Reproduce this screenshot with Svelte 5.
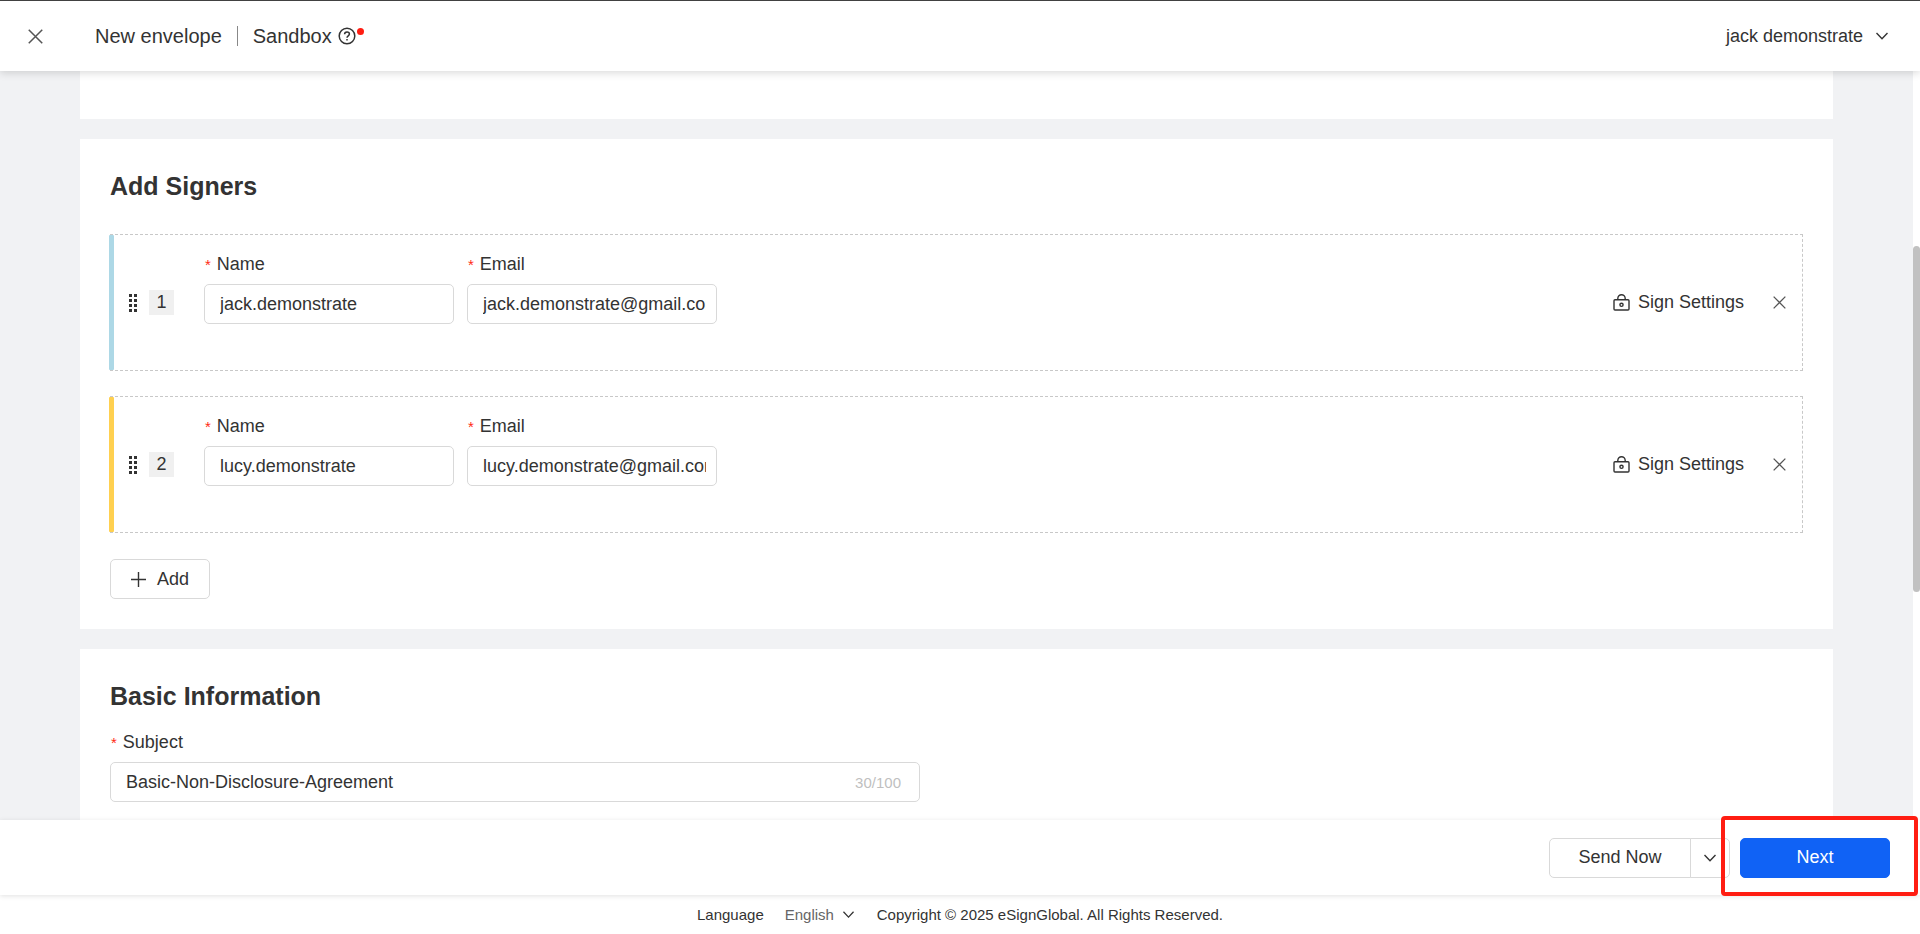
<script lang="ts">
    interface Signer {
        name: string;
        email: string;
        color: string;
    }

    let signers: Signer[] = $state([
        { name: "jack.demonstrate", email: "jack.demonstrate@gmail.com", color: "#add8e6" },
        { name: "lucy.demonstrate", email: "lucy.demonstrate@gmail.com", color: "#ffd050" },
    ]);

    let subject = $state("Basic-Non-Disclosure-Agreement");
    let language = $state("English");

    const colors = ["#add8e6", "#ffd050"];

    function addSigner() {
        signers.push({ name: "", email: "", color: colors[signers.length % colors.length] });
    }

    function removeSigner(index: number) {
        signers.splice(index, 1);
    }
</script>

{#snippet cross(size: number)}
    <svg width={size} height={size} viewBox="0 0 14 14" aria-hidden="true">
        <path d="M0.7 0.7L13.3 13.3M13.3 0.7L0.7 13.3" />
    </svg>
{/snippet}

{#snippet chevron(size: number)}
    <svg width={size} height={size} viewBox="0 0 12 12" aria-hidden="true">
        <path d="M0.5 3L6 8.8L11.5 3" />
    </svg>
{/snippet}

<div class="page">
    <header class="topbar">
        <button class="icon-button close" aria-label="Close">{@render cross(15)}</button>
        <span class="title">New envelope</span>
        <span class="divider"></span>
        <span class="title">Sandbox</span>
        <button class="icon-button help" aria-label="Help">
            <svg width="18" height="18" viewBox="0 0 18 18" aria-hidden="true">
                <circle cx="9" cy="9" r="7.8" />
                <path d="M6.6 7.3C6.6 5.8 7.6 5 9 5s2.4 0.8 2.4 2.1c0 1.7-2.4 1.8-2.4 3.6" />
                <path d="M9 12v1.6" />
            </svg>
            <span class="dot"></span>
        </button>
        <button class="icon-button user">
            jack demonstrate
            {@render chevron(12)}
        </button>
    </header>

    <div class="body">
        <main class="content">
            <section class="card previous"></section>

            <section class="card">
                <h2>Add Signers</h2>
                <div class="signers">
                    {#each signers as signer, i}
                        <div class="signer" style:--signer-color={signer.color}>
                            <svg class="grip" width="8" height="18" viewBox="0 0 8 18" aria-hidden="true">
                                {#each [0, 5, 10, 15] as y}
                                    <rect x="0" {y} width="3" height="3" />
                                    <rect x="5" {y} width="3" height="3" />
                                {/each}
                            </svg>
                            <span class="order">{i + 1}</span>
                            <div class="fields">
                                <div class="field">
                                    <label for="name-{i}"><span class="required">*</span>Name</label>
                                    <input id="name-{i}" type="text" bind:value={signer.name} />
                                </div>
                                <div class="field">
                                    <label for="email-{i}"><span class="required">*</span>Email</label>
                                    <input id="email-{i}" type="text" bind:value={signer.email} />
                                </div>
                            </div>
                            <button class="icon-button settings">
                                <svg width="17" height="17" viewBox="0 0 17 17" aria-hidden="true">
                                    <rect x="1" y="5.7" width="15" height="10.3" rx="1" />
                                    <path d="M4.8 5.7V4.4a3.7 3.7 0 0 1 7.4 0v1.3" />
                                    <circle cx="8.5" cy="10.8" r="1.6" />
                                </svg>
                                Sign Settings
                            </button>
                            <button
                                class="icon-button remove"
                                aria-label="Remove signer"
                                onclick={() => removeSigner(i)}
                            >
                                {@render cross(13)}
                            </button>
                        </div>
                    {/each}
                </div>
                <button class="button add" onclick={addSigner}>
                    <svg width="15" height="15" viewBox="0 0 15 15" aria-hidden="true">
                        <path d="M7.5 0V15M0 7.5H15" />
                    </svg>
                    Add
                </button>
            </section>

            <section class="card">
                <h2>Basic Information</h2>
                <div class="field subject">
                    <label for="subject"><span class="required">*</span>Subject</label>
                    <div class="counted">
                        <input id="subject" type="text" maxlength="100" bind:value={subject} />
                        <span class="count">{subject.length}/100</span>
                    </div>
                </div>
            </section>
        </main>
        <div class="scrollbar">
            <div class="thumb"></div>
        </div>
    </div>

    <div class="actions">
        <div class="split">
            <button class="button send">Send Now</button>
            <button class="button more" aria-label="More send options">{@render chevron(12)}</button>
        </div>
        <div class="next-wrap">
            <button class="button next">Next</button>
            <div class="highlight"></div>
        </div>
    </div>

    <footer class="footer">
        <label for="language">Language</label>
        <div class="language">
            <select id="language" bind:value={language}>
                <option>English</option>
            </select>
            {@render chevron(11)}
        </div>
        <span>Copyright © 2025 eSignGlobal. All Rights Reserved.</span>
    </footer>
</div>

<style>
    :global(body) {
        margin: 0;
    }

    .page {
        display: flex;
        flex-direction: column;
        height: 100vh;
        box-sizing: border-box;
        border-top: 1px solid #444;

        background-color: #fff;
        color: #333;
        font-family: "Liberation Sans", Arial, sans-serif;
        font-size: 18px;
        line-height: 25px;
    }

    .page * {
        box-sizing: border-box;
    }

    svg {
        display: block;
        flex: none;
        fill: none;
        stroke: #333;
        stroke-width: 1.4;
    }

    button,
    input,
    select {
        margin: 0;
        color: inherit;
        font: inherit;
    }

    .icon-button {
        display: flex;
        align-items: center;
        padding: 0;
        border: none;
        background: none;
        cursor: pointer;
    }

    .topbar {
        position: relative;
        z-index: 1;
        display: flex;
        align-items: center;
        flex: none;
        height: 70px;
        padding: 0 32px 0 28px;
        background-color: #fff;
        box-shadow: 0 2px 8px rgba(0, 0, 0, 0.15);
    }

    .close {
        margin-right: 52px;
    }

    .close svg,
    .remove svg {
        stroke: #555;
    }

    .title {
        font-size: 20px;
    }

    .divider {
        width: 1px;
        height: 20px;
        margin: 0 15px;
        background-color: #888;
    }

    .help {
        position: relative;
        margin-left: 6px;
    }

    .help svg {
        stroke-width: 1.5;
    }

    .dot {
        position: absolute;
        top: 1px;
        right: -8px;
        width: 7px;
        height: 7px;
        border-radius: 50%;
        background-color: #ff1d12;
    }

    .user {
        gap: 13px;
        margin-left: auto;
    }

    .body {
        display: flex;
        flex: 1;
        min-height: 0;
    }

    .content {
        display: flex;
        flex-direction: column;
        flex: 1;
        gap: 20px;
        padding: 0 80px;
        overflow: hidden;
        background-color: #f1f2f4;
    }

    .card {
        flex: none;
        padding: 30px;
        background-color: #fff;
    }

    .previous {
        padding: 24px;
    }

    h2 {
        margin: 0;
        font-size: 25px;
        line-height: 35px;
    }

    .signers {
        display: flex;
        flex-direction: column;
        gap: 25px;
        margin: 30px 0 26px;
    }

    .signer {
        position: relative;
        display: flex;
        align-items: center;
        padding: 0 16px 0 18px;
        border: 1px dashed #c8c8c8;
    }

    .signer::before {
        content: "";
        position: absolute;
        top: 0;
        bottom: 0;
        left: -2px;
        width: 5px;
        border-radius: 1px;
        background-color: var(--signer-color);
    }

    .grip rect {
        fill: #333;
        stroke: none;
    }

    .order {
        width: 25px;
        margin: 0 30px 0 12px;
        background-color: #f0f0f0;
        text-align: center;
    }

    .fields {
        display: flex;
        gap: 13px;
        padding: 17px 0 46px;
    }

    .field {
        display: flex;
        flex-direction: column;
        gap: 7px;
        width: 250px;
    }

    .required {
        margin: 0 6px 0 1px;
        color: #ff2a12;
        font-size: 15px;
    }

    input {
        width: 100%;
        height: 40px;
        padding: 0 10px 0 15px;
        border: 1px solid #d9d9d9;
        border-radius: 5px;
        background-color: #fff;
    }

    .settings {
        gap: 8px;
        margin-left: auto;
    }

    .remove {
        margin-left: 29px;
    }

    .button {
        display: flex;
        align-items: center;
        justify-content: center;
        height: 40px;
        padding: 0;
        border: 1px solid #d9d9d9;
        border-radius: 5px;
        background-color: #fff;
        cursor: pointer;
    }

    .add {
        gap: 11px;
        width: 100px;
    }

    .subject {
        width: 100%;
        max-width: 810px;
        margin-top: 16px;
    }

    .counted {
        position: relative;
    }

    .count {
        position: absolute;
        top: 8px;
        right: 19px;
        color: #bfbfbf;
        font-size: 15px;
    }

    .scrollbar {
        display: flex;
        flex-direction: column;
        flex: none;
        width: 7px;
    }

    .scrollbar::before {
        content: "";
        flex: 175;
    }

    .scrollbar::after {
        content: "";
        flex: 228;
    }

    .thumb {
        flex: 346;
        border-radius: 4px;
        background-color: #c1c1c1;
    }

    .actions {
        position: relative;
        display: flex;
        align-items: center;
        justify-content: flex-end;
        flex: none;
        gap: 10px;
        height: 75px;
        padding: 0 30px;
        background-color: #fff;
        box-shadow: 0 1px 5px rgba(0, 0, 0, 0.12);
    }

    .split {
        display: flex;
    }

    .send {
        width: 142px;
        border-radius: 5px 0 0 5px;
    }

    .more {
        width: 40px;
        margin-left: -1px;
        border-radius: 0 5px 5px 0;
    }

    .next-wrap {
        position: relative;
    }

    .next {
        width: 150px;
        border-color: #1062f5;
        background-color: #1062f5;
        color: #fff;
    }

    .highlight {
        position: absolute;
        inset: -22px -28px -18px -19px;
        border: 4px solid #ff1d12;
        border-radius: 4px;
        pointer-events: none;
    }

    .footer {
        display: flex;
        align-items: center;
        justify-content: center;
        flex: none;
        height: 39px;
        font-size: 15px;
    }

    .language {
        display: grid;
        align-items: center;
        width: 69px;
        margin: 0 23px 0 21px;
        color: #666;
    }

    .language select,
    .language svg {
        grid-area: 1 / 1;
    }

    .language select {
        width: 100%;
        padding: 0;
        border: none;
        background: none;
        appearance: none;
    }

    .language svg {
        justify-self: end;
        pointer-events: none;
    }
</style>
